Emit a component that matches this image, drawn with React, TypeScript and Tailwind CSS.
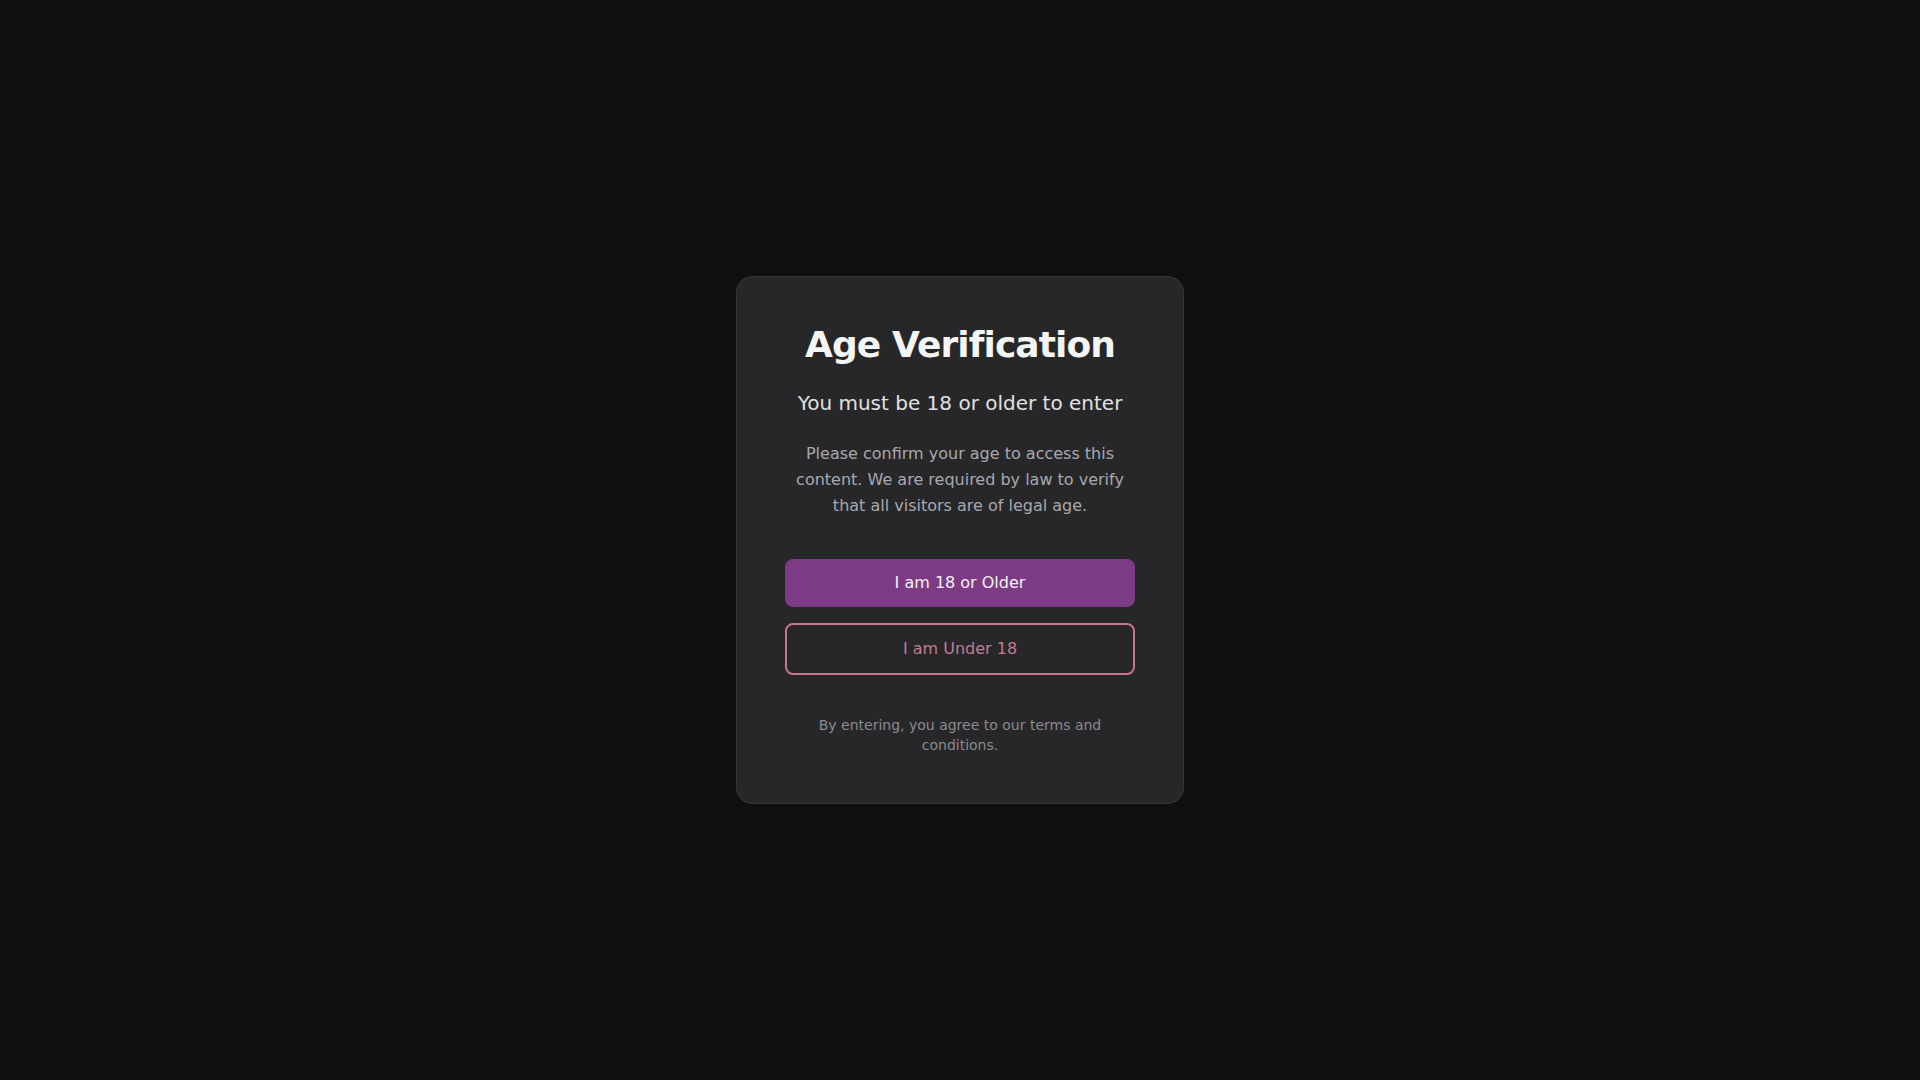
export default function App() {
  return (
    <main className="flex min-h-screen w-full items-center justify-center bg-[#0f0f0f] font-['DejaVu_Sans',sans-serif]">
      <div className="w-[448px] rounded-2xl border border-[#3a353d] bg-[#27272a] p-12 text-center">
        <h1 className="mb-6 text-4xl font-bold tracking-tight text-[#f5f5f5]">Age Verification</h1>
        <p className="mb-6 text-xl text-[#e0e0e3]">You must be 18 or older to enter</p>
        <p className="mb-10 leading-relaxed text-[#a8a8ad]">
          Please confirm your age to access this content. We are required by law to verify that all
          visitors are of legal age.
        </p>
        <div className="flex flex-col gap-4">
          <button className="w-full rounded-lg bg-[#7e3b85] py-3 text-base text-[#f2f2f2]">
            I am 18 or Older
          </button>
          <button className="w-full rounded-lg border-2 border-[#c7758c] py-3 text-base text-[#c27b8f]">
            I am Under 18
          </button>
        </div>
        <p className="mt-10 text-sm text-[#8a8a8f]">
          By entering, you agree to our terms and conditions.
        </p>
      </div>
    </main>
  );
}
